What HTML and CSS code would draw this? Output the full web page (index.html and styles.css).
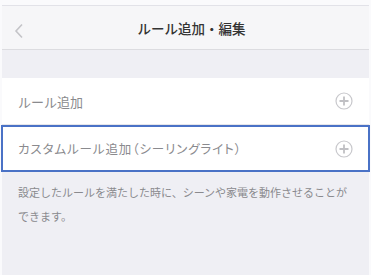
FILE: index.html
```html
<!DOCTYPE html>
<html lang="ja">
<head>
    <meta charset="UTF-8">
    <meta name="viewport" content="width=device-width, initial-scale=1.0">
    <title>ルール追加・編集</title>
    <link rel="stylesheet" href="styles.css">
</head>
<body>
    <div class="screen">
        <div class="nav-bar">
            <span class="back">
                <svg width="10" height="16" viewBox="0 0 10 16"><path d="M8 1.5 L2 8 L8 14.5" fill="none" stroke="#c4c4c8" stroke-width="1.6"/></svg>
            </span>
            <h1 class="title">ルール追加・編集</h1>
        </div>

        <div class="spacer"></div>

        <ul class="rule-list">
            <li class="rule-item">
                <span class="rule-label">ルール追加</span>
                <svg class="plus" width="18" height="18" viewBox="0 0 18 18"><circle cx="9" cy="9" r="8" fill="none" stroke="#c8c8cc" stroke-width="1.2"/><path d="M9 4.5 V13.5 M4.5 9 H13.5" stroke="#c0c0c4" stroke-width="1.8"/></svg>
            </li>
            <li class="rule-item selected">
                <span class="rule-label custom">カスタムルール追加（シーリングライト）</span>
                <svg class="plus" width="18" height="18" viewBox="0 0 18 18"><circle cx="9" cy="9" r="8" fill="none" stroke="#c8c8cc" stroke-width="1.2"/><path d="M9 4.5 V13.5 M4.5 9 H13.5" stroke="#c0c0c4" stroke-width="1.8"/></svg>
            </li>
        </ul>

        <p class="note">設定したルールを満たした時に、シーンや家電を動作させることができます。</p>
    </div>
</body>
</html>
```

FILE: styles.css
```css
html, body {
    margin: 0;
    padding: 0;
}

body {
    font-family: "Noto Sans CJK JP", "Noto Sans", sans-serif;
    background-color: #fafafc;
    width: 371px;
    height: 275px;
    overflow: hidden;
}

.screen {
    margin: 5px 2px 1px 2px;
    height: 269px;
    background-color: #efeff4;
    border-top: 1px solid #e2e2e8;
}

.nav-bar {
    height: 43px;
    background-color: #f6f6f8;
    border-bottom: 1px solid #dcdce0;
    display: flex;
    align-items: center;
    position: relative;
}

.back {
    position: absolute;
    left: 12px;
    top: 14px;
}

.title {
    flex: 1;
    margin: 0;
    text-align: center;
    font-size: 13.5px;
    font-weight: 500;
    color: #333;
    padding-left: 12px;
}

.spacer {
    height: 28px;
}

.rule-list {
    list-style: none;
    margin: 0;
    padding: 0;
}

.rule-item {
    height: 46px;
    background-color: #fff;
    display: flex;
    align-items: center;
    justify-content: space-between;
    padding: 0 16px 0 16px;
    border-bottom: 1px solid #e6e6ea;
}

.rule-item.selected {
    height: 43px;
    border: 2px solid #4a72c6;
    margin: 0 -1px;
    padding: 0 15px 0 15px;
}

.rule-label {
    font-size: 13px;
    color: #8a8a8e;
}

.rule-label.custom {
    font-size: 12.5px;
    font-feature-settings: "palt";
    letter-spacing: 0.9px;
}

.plus {
    display: block;
}

.note {
    margin: 0;
    padding: 8px 16px 0 16px;
    font-size: 11px;
    line-height: 24px;
    color: #8a8a8e;
}
```
